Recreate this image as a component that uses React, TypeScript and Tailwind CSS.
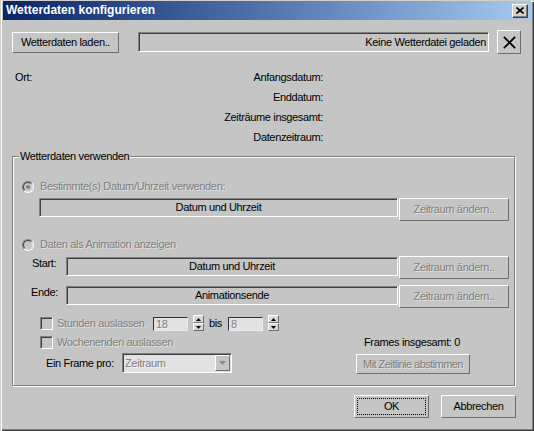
import React from "react";

const raised = "border border-t-white border-l-white border-b-[#6e6e6e] border-r-[#6e6e6e]";
const sunken = "border border-t-[#808080] border-l-[#808080] border-b-white border-r-white shadow-[inset_1px_1px_0_#404040]";
const muted = "text-[#808080] [text-shadow:1px_1px_0_rgba(255,255,255,0.5)]";

function Radio({ checked }: { checked?: boolean }) {
    return (
        <span className="flex items-center justify-center w-[12px] h-[12px] rounded-full border border-t-[#808080] border-l-[#808080] border-b-white border-r-white">
            <span className="flex items-center justify-center w-[10px] h-[10px] rounded-full border border-t-[#404040] border-l-[#404040] border-b-[#dcdcdc] border-r-[#dcdcdc] bg-[#c5c5c5]">
                {checked && <span className="w-[4px] h-[4px] rounded-full bg-[#808080]" />}
            </span>
        </span>
    );
}

function Check() {
    return <span className={`block w-[13px] h-[13px] bg-[#c5c5c5] ${sunken}`} />;
}

function Spin() {
    return (
        <div className="flex flex-col w-[11px] h-[16px]">
            <div className={`flex-1 flex items-center justify-center bg-[#d8d8d8] ${raised}`}>
                <svg width="5" height="3" viewBox="0 0 5 3"><path d="M2.5 0L5 3H0Z" fill="#000" /></svg>
            </div>
            <div className={`flex-1 flex items-center justify-center bg-[#d8d8d8] ${raised}`}>
                <svg width="5" height="3" viewBox="0 0 5 3"><path d="M0 0H5L2.5 3Z" fill="#000" /></svg>
            </div>
        </div>
    );
}

function ChangeButton() {
    return (
        <button className={`ml-[1px] w-[110px] h-[23px] px-0 whitespace-nowrap bg-[#c5c5c5] ${raised} ${muted}`}>
            Zeitraum ändern..
        </button>
    );
}

export default function App() {
    return (
        <div className="w-[534px] h-[431px] flex flex-col pt-[1px] px-[3px] bg-[#c5c5c5] text-[11px] leading-[13px] tracking-[-0.35px] whitespace-nowrap text-black font-['Liberation_Sans',Arial,sans-serif] shadow-[inset_1px_1px_0_#d4d0c8,inset_2px_2px_0_#fff,inset_-1px_-1px_0_#404040,inset_-2px_-2px_0_#808080] overflow-hidden">
            {/* title bar */}
            <div className="flex items-center h-[19px] pl-[3px] pr-[3px] bg-linear-to-r from-[#0a246a] to-[#a6caf0]">
                <span className="flex-1 text-white font-bold text-[12px] tracking-normal">Wetterdaten konfigurieren</span>
                <button className="flex items-center justify-center w-[16px] h-[14px] bg-[#d4d0c8] border border-t-white border-l-white border-b-[#404040] border-r-[#404040] shadow-[inset_-1px_-1px_0_#808080]">
                    <svg width="8" height="7" viewBox="0 0 8 7"><path d="M0.5 0.5L7.5 6.5M7.5 0.5L0.5 6.5" stroke="#000" strokeWidth="1.6" /></svg>
                </button>
            </div>

            <div className="flex flex-col pl-[9px]">
                {/* load row */}
                <div className="flex items-center h-[24px] mt-[10px]">
                    <button className={`w-[107px] h-[21px] px-0 bg-[#c5c5c5] ${raised}`}>Wetterdaten laden..</button>
                    <div className={`ml-[19px] w-[351px] h-[20px] flex items-center justify-end pr-[2px] ${sunken}`}>
                        Keine Wetterdatei geladen
                    </div>
                    <button className={`ml-[8px] w-[24px] h-[24px] flex items-center justify-center bg-[#c5c5c5] ${raised}`}>
                        <svg width="15" height="15" viewBox="0 0 16 16"><path d="M2 2L14 14M14 2L2 14" stroke="#000" strokeWidth="2" /></svg>
                    </button>
                </div>

                {/* info */}
                <div className="mt-[13px] ml-[3px] w-[308px] flex flex-col leading-[20px]">
                    <div className="flex justify-between"><span>Ort:</span><span>Anfangsdatum:</span></div>
                    <div className="flex justify-end">Enddatum:</div>
                    <div className="flex justify-end">Zeiträume insgesamt:</div>
                    <div className="flex justify-end">Datenzeitraum:</div>
                </div>

                {/* group */}
                <div className="relative mt-[9px] w-[503px] h-[230px] flex flex-col border border-[#808080] shadow-[1px_1px_0_#fff,inset_1px_1px_0_#fff]">
                    <span className="absolute left-[6px] top-[-7px] px-[1px] bg-[#c5c5c5]">Wetterdaten verwenden</span>

                    <div className="mt-[23px] ml-[9px] h-[13px] flex items-center gap-[6px]">
                        <Radio checked />
                        <span className={muted}>Bestimmte(s) Datum/Uhrzeit verwenden:</span>
                    </div>
                    <div className="mt-[5px] ml-[26px] flex items-start">
                        <div className={`w-[359px] h-[19px] flex items-center justify-center ${sunken}`}>Datum und Uhrzeit</div>
                        <ChangeButton />
                    </div>

                    <div className="mt-[17px] ml-[9px] h-[13px] flex items-center gap-[6px]">
                        <Radio />
                        <span className={muted}>Daten als Animation anzeigen</span>
                    </div>
                    <div className="mt-[5px] ml-[19px] flex items-start">
                        <span className="w-[34px] mt-[1px]">Start:</span>
                        <div className={`mt-[1px] w-[332px] h-[19px] flex items-center justify-center ${sunken}`}>Datum und Uhrzeit</div>
                        <ChangeButton />
                    </div>
                    <div className="mt-[6px] ml-[18px] flex items-start">
                        <span className="w-[35px] mt-[1px]">Ende:</span>
                        <div className={`mt-[1px] w-[332px] h-[19px] flex items-center justify-center ${sunken}`}>Animationsende</div>
                        <ChangeButton />
                    </div>

                    <div className="mt-[7px] ml-[27px] h-[16px] flex items-center">
                        <Check />
                        <span className={`ml-[4px] w-[96px] ${muted}`}>Stunden auslassen</span>
                        <div className={`self-end w-[35px] h-[14px] flex items-center pl-[2px] bg-[#e2e2e2] border border-t-[#303030] border-l-[#303030] border-b-[#ebebeb] border-r-[#ebebeb] ${muted}`}>18</div>
                        <span className="ml-[5px]"><Spin /></span>
                        <span className="ml-[5px] w-[19px]">bis</span>
                        <div className={`self-end w-[35px] h-[14px] flex items-center pl-[2px] bg-[#e2e2e2] border border-t-[#303030] border-l-[#303030] border-b-[#ebebeb] border-r-[#ebebeb] ${muted}`}>8</div>
                        <span className="ml-[5px]"><Spin /></span>
                    </div>
                    <div className="mt-[4px] ml-[27px] h-[14px] flex items-center">
                        <Check />
                        <span className={`ml-[4px] w-[307px] ${muted}`}>Wochenenden auslassen</span>
                        <span>Frames insgesamt: 0</span>
                    </div>
                    <div className="mt-[4px] ml-[33px] h-[21px] flex items-center">
                        <span className="w-[76px]">Ein Frame pro:</span>
                        <div className={`self-start flex items-center w-[110px] h-[20px] pl-[2px] pr-[1px] bg-[#e2e2e2] ${sunken}`}>
                            <span className={`flex-1 ${muted}`}>Zeitraum</span>
                            <span className={`flex items-center justify-center w-[15px] h-[16px] bg-[#c5c5c5] ${raised}`}>
                                <svg width="7" height="4" viewBox="0 0 7 4"><path d="M0 0H7L3.5 4Z" fill="#8a8a8a" /></svg>
                            </span>
                        </div>
                        <button className={`self-end ml-[124px] w-[114px] h-[20px] px-0 tracking-[-0.55px] bg-[#c5c5c5] ${raised} ${muted}`}>Mit Zeitlinie abstimmen</button>
                    </div>
                </div>

                {/* footer */}
                <div className="mt-[9px] w-[504px] flex justify-end gap-[12px]">
                    <button className={`w-[75px] h-[23px] bg-[#c5c5c5] ${raised} outline-1 outline-dotted outline-black outline-offset-[-4px]`}>OK</button>
                    <button className={`w-[75px] h-[23px] bg-[#c5c5c5] ${raised}`}>Abbrechen</button>
                </div>
            </div>
        </div>
    );
}
